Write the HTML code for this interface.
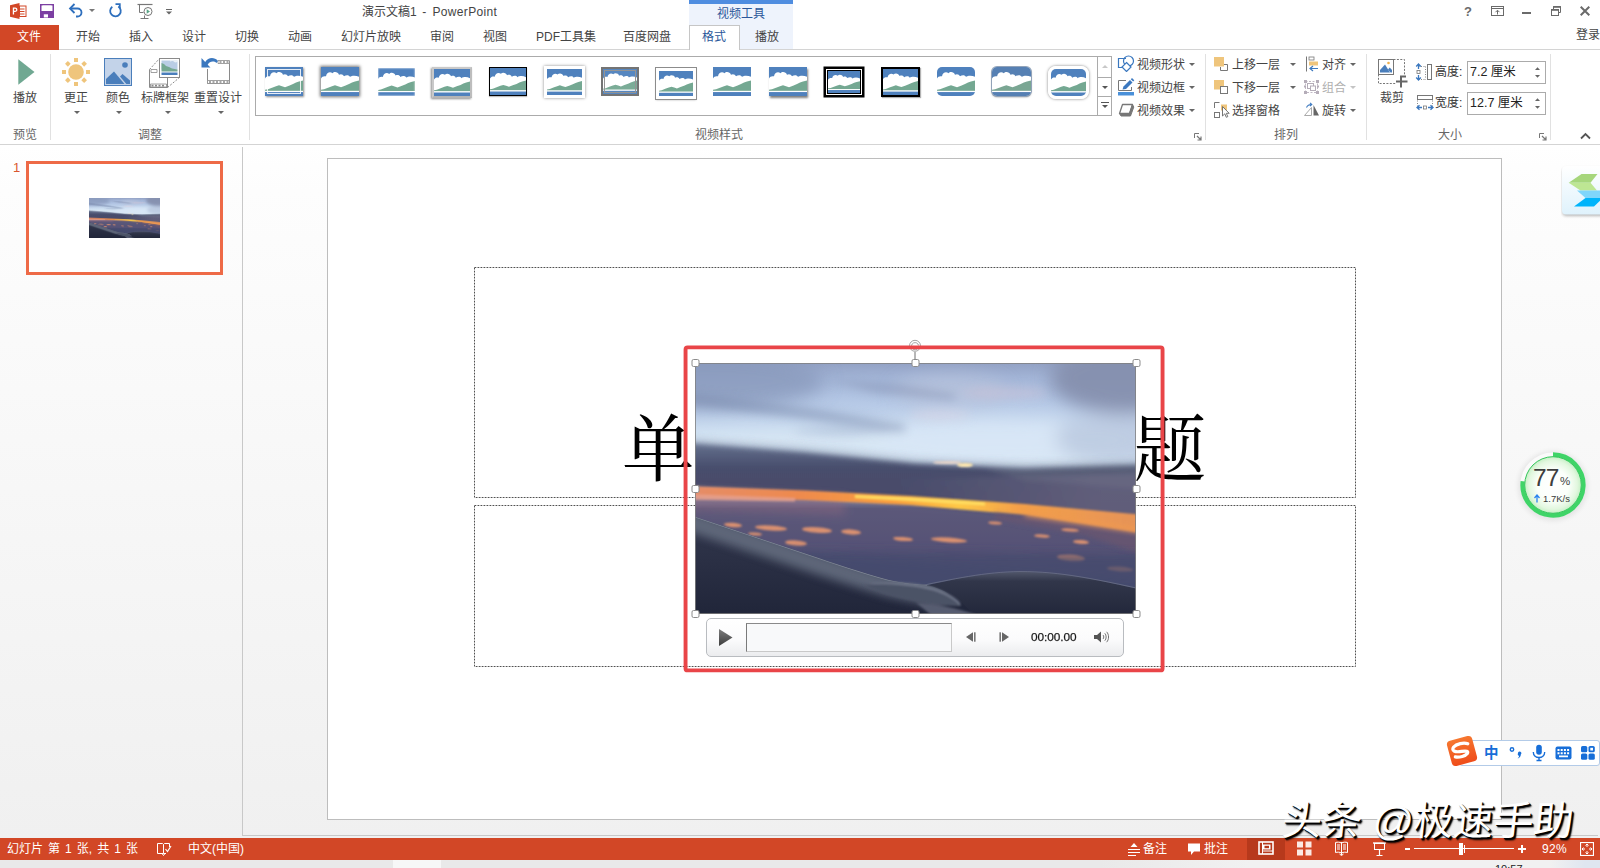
<!DOCTYPE html>
<html lang="zh-CN">
<head>
<meta charset="utf-8">
<title>演示文稿1 - PowerPoint</title>
<style>
*{box-sizing:border-box;margin:0;padding:0}
html,body{width:1600px;height:868px;overflow:hidden;background:#fff}
body{position:relative;font-family:"Liberation Sans","Noto Sans CJK SC",sans-serif;font-size:12px;color:#444;-webkit-font-smoothing:antialiased}
.abs{position:absolute}
.t{position:absolute;white-space:nowrap;line-height:1}
/* title bar */
#titlebar{left:0;top:0;width:1600px;height:24px;background:#fff}
#tabs{left:0;top:24px;width:1600px;height:26px;background:#fff;border-bottom:1px solid #d4d4d4}
#filetab{left:0;top:25px;width:59px;height:25px;background:#d24726;color:#fff}
.tab{position:absolute;top:31px;font-size:12px;color:#444;white-space:nowrap;line-height:1}
#ctx{left:689px;top:0;width:104px;height:49px;background:#eef3fc;border-top:4px solid #4f8de0}
#fmt{left:689px;top:25px;width:51px;height:25px;background:#fff;border:1px solid #c6c6c6;border-bottom:none}
/* ribbon */
#ribbon{left:0;top:50px;width:1600px;height:95px;background:#fff;border-bottom:1px solid #d4d4d4}
.sep{position:absolute;top:54px;width:1px;height:86px;background:#e1e1e1}
.glabel{position:absolute;top:129px;font-size:12px;color:#666;line-height:1;white-space:nowrap}
.blabel{position:absolute;font-size:12px;color:#444;line-height:1;white-space:nowrap}
.dd{position:absolute;width:0;height:0;border-left:3px solid transparent;border-right:3px solid transparent;border-top:3px solid #666}
/* workspace */
#work{left:0;top:145px;width:1600px;height:693px;background:linear-gradient(#ffffff 0px,#fdfdfd 45px,#f0f0f0 100%)}
#vsplit{left:242px;top:147px;width:1px;height:689px;background:#c8c8c8}
#hsplit{left:243px;top:835px;width:1355px;height:1px;background:#c8c8c8}
#slide{left:327px;top:158px;width:1175px;height:662px;background:#fff;border:1px solid #bdbdbd}
#thumb{left:26px;top:161px;width:197px;height:114px;background:#fff;border:3px solid #ee6a47}
/* status */
#status{left:0;top:838px;width:1600px;height:22px;background:#d24726;color:#fff}
#taskbar{left:0;top:860px;width:1600px;height:8px;background:#e9e9e9}
.st{position:absolute;top:843px;font-size:12px;color:#fff;line-height:1;white-space:nowrap}
.ph{position:absolute;border:1px dashed #8a8a8a}
</style>
</head>
<body>
<div class="abs" id="titlebar"></div>
<div class="abs" id="tabs"></div>
<div class="abs" id="ctx"></div>
<div class="abs" id="fmt"></div>
<div class="abs" id="filetab"></div>
<div class="abs" id="ribbon"></div>
<div class="abs" id="work"></div>
<div class="abs" id="vsplit"></div>
<div class="abs" id="hsplit"></div>
<div class="abs" id="slide"></div>
<div class="abs" id="thumb"></div>
<div class="abs" id="status"></div>
<div class="abs" id="taskbar"></div>
<div class="t" style="left:362px;top:6px;font-size:12px;color:#444">演示文稿1<span style="word-spacing:2px;letter-spacing:.35px"> - PowerPoint</span></div>
<div class="t" style="left:717px;top:8px;font-size:12px;color:#2b579a">视频工具</div>
<div class="t" style="left:1576px;top:29px;font-size:12px;color:#444">登录</div>
<svg class="abs" style="left:9px;top:2px" width="18" height="18" viewBox="0 0 18 18"><path d="M1 3.2 L10.5 1 V17 L1 14.8Z" fill="#d24726"/><rect x="10.5" y="4" width="6.5" height="10.5" fill="#fff" stroke="#d24726" stroke-width="1"/><path d="M11 7h4.5M11 9.5h4.5M11 12h4.5" stroke="#d24726" stroke-width="1"/><path d="M3.8 12.6V5.6h2.3c1.5 0 2.3.8 2.3 2.1s-.9 2.2-2.4 2.2h-.9v2.7z M5.1 6.7v2.1h.8c.8 0 1.200-.4 1.200-1.100s-.4-1-1.200-1z" fill="#fff" fill-rule="evenodd"/></svg>
<svg class="abs" style="left:40px;top:4px" width="14" height="14" viewBox="0 0 14 14"><path d="M0.750 0.750H13.250V13.250H0.750Z" fill="none" stroke="#7c3fa2" stroke-width="1.5"/><rect x="1" y="7" width="12" height="6.500" fill="#7c3fa2"/><rect x="3.800" y="10.300" width="4.200" height="3.200" fill="#fff"/><rect x="2.500" y="1.500" width="9" height="4.500" fill="#fff"/></svg>
<svg class="abs" style="left:68px;top:3px" width="16" height="15" viewBox="0 0 16 15"><path d="M2.500 5.500H9.500A4 4 0 0 1 9.500 13.500H8" fill="none" stroke="#2e6fbd" stroke-width="1.800"/><path d="M6.500 1L2 5.500L6.500 10" fill="none" stroke="#2e6fbd" stroke-width="1.800"/></svg>
<div class="dd" style="left:89px;top:9px;border-top-color:#777"></div>
<svg class="abs" style="left:108px;top:3px" width="15" height="15" viewBox="0 0 15 15"><path d="M10.300 3.600A5.300 5.300 0 1 1 4.300 3.800" fill="none" stroke="#2e6fbd" stroke-width="1.800"/><path d="M7.500 1.200H11.800V5.600" fill="none" stroke="#2e6fbd" stroke-width="1.800"/></svg>
<svg class="abs" style="left:137px;top:3px" width="17" height="17" viewBox="0 0 17 17"><path d="M0.500 1.500H15.500" stroke="#777" stroke-width="1.200"/><path d="M2.500 1.500V9.500H6.500M3.500 15.500H11.500M7.500 12.500V15.500" stroke="#777" stroke-width="1" fill="none"/><circle cx="11" cy="8.500" r="4" fill="#fff" stroke="#777" stroke-width="1"/><path d="M9.700 6.300L13 8.500L9.700 10.700Z" fill="#5aa587"/></svg>
<svg class="abs" style="left:165px;top:8px" width="8" height="8" viewBox="0 0 8 8"><path d="M1 1.500H7" stroke="#666" stroke-width="1"/><path d="M1 3.500H7L4 6.500Z" fill="#666"/></svg>
<div class="t" style="left:1464px;top:5px;font-size:13px;font-weight:bold;color:#6a6a6a">?</div>
<svg class="abs" style="left:1491px;top:6px" width="13" height="10" viewBox="0 0 13 10"><rect x="0.500" y="0.500" width="12" height="9" fill="none" stroke="#6a6a6a"/><path d="M0.500 2.500H12.500" stroke="#6a6a6a"/><path d="M6.500 8.500V4.500M4.500 6.200L6.500 4.200L8.500 6.200" fill="none" stroke="#6a6a6a" stroke-width="1"/></svg>
<div class="abs" style="left:1522px;top:12px;width:9px;height:2px;background:#6a6a6a"></div>
<svg class="abs" style="left:1551px;top:6px" width="10" height="10" viewBox="0 0 10 10"><path d="M2.500 3V0.500H9.500V6.500H7.500" fill="none" stroke="#6a6a6a" stroke-width="1"/><path d="M2 1H10" stroke="#6a6a6a" stroke-width="1.600"/><rect x="0.500" y="3.500" width="7" height="6" fill="#fff" stroke="#6a6a6a"/><path d="M0 4H8" stroke="#6a6a6a" stroke-width="1.600"/></svg>
<svg class="abs" style="left:1580px;top:6px" width="10" height="10" viewBox="0 0 10 10"><path d="M0.700 0.700L9.300 9.300M9.300 0.700L0.700 9.300" stroke="#6a6a6a" stroke-width="2"/></svg>
<!--TITLE-->
<div class="tab" style="left:17px;color:#fff">文件</div>
<div class="tab" style="left:76px;color:#444">开始</div>
<div class="tab" style="left:129px;color:#444">插入</div>
<div class="tab" style="left:182px;color:#444">设计</div>
<div class="tab" style="left:235px;color:#444">切换</div>
<div class="tab" style="left:288px;color:#444">动画</div>
<div class="tab" style="left:341px;color:#444">幻灯片放映</div>
<div class="tab" style="left:430px;color:#444">审阅</div>
<div class="tab" style="left:483px;color:#444">视图</div>
<div class="tab" style="left:536px;color:#444">PDF工具集</div>
<div class="tab" style="left:623px;color:#444">百度网盘</div>
<div class="tab" style="left:702px;color:#2b579a">格式</div>
<div class="tab" style="left:755px;color:#444">播放</div>
<!--TABS-->
<svg width="0" height="0" style="position:absolute"><defs>
<symbol id="pic" viewBox="0 0 38 28" preserveAspectRatio="none"><rect width="38" height="28" fill="#4f81bd"/><path d="M0 11 C1 9 3 8.500 5 9 C5.500 5.500 9 4 11.500 6 C13 4 17 4.500 18 7.500 C20 6.500 22 7 23 9 C25 7.500 28 7.500 29 9.500 C31 8 35 8 38 9.500 V24 H0Z" fill="#fff"/><path d="M0 22 L3 21.500 L7 20 L11 18.500 L14 17.500 L17 18.500 L20 19.500 L24 18 L28 16.500 L31 15 L34 14 L38 13 V23.500 H0Z" fill="#74a892"/><rect y="23" width="38" height="1.200" fill="#fff"/></symbol>
</defs></svg>
<svg class="abs" style="left:18px;top:59px" width="17" height="26" viewBox="0 0 17 26"><path d="M0.300 0.300L16.500 13L0.300 25.700Z" fill="#70a892"/></svg>
<div class="blabel" style="left:13px;top:92px">播放</div>
<div class="glabel" style="left:13px">预览</div>
<div class="sep" style="left:50px"></div>
<svg class="abs" style="left:62px;top:58px" width="28" height="28" viewBox="0 0 28 28"><g fill="#efc57c"><circle cx="14" cy="14" r="7.800"/><rect x="12" y="0" width="4" height="4"/><rect x="12" y="24" width="4" height="4"/><rect x="0" y="12" width="4" height="4"/><rect x="24" y="12" width="4" height="4"/><g transform="rotate(45 14 14)"><rect x="12" y="0.500" width="4" height="4"/><rect x="12" y="23.500" width="4" height="4"/><rect x="0.500" y="12" width="4" height="4"/><rect x="23.500" y="12" width="4" height="4"/></g></g></svg>
<div class="blabel" style="left:64px;top:92px">更正</div>
<div class="dd" style="left:74px;top:111px"></div>
<svg class="abs" style="left:104px;top:58px" width="28" height="28" viewBox="0 0 28 28"><rect x="0.500" y="0.500" width="27" height="27" fill="#c3d3e9" stroke="#4a7ebb"/><circle cx="21" cy="7" r="2.800" fill="#4a7ebb"/><path d="M2 26V21L10 13.500L20.500 26Z" fill="#4a7ebb"/><path d="M16 18.500L18.500 16L26 22.500V26H22.300Z" fill="#4a7ebb"/></svg>
<div class="blabel" style="left:106px;top:92px">颜色</div>
<div class="dd" style="left:116px;top:111px"></div>
<svg class="abs" style="left:148px;top:57px" width="33" height="32" viewBox="0 0 33 32"><path d="M1.500 12.500V30.500H19.500V21" fill="none" stroke="#8a8a8a" stroke-width="1"/><path d="M1.500 12.500L11.500 1.500M19.500 30.500L31.500 20.500" stroke="#8a8a8a" stroke-width="1" stroke-dasharray="2 1.500" fill="none"/><path d="M2.500 27H18.500V30H2.500Z" fill="#fff" stroke="#8a8a8a" stroke-width="0.800"/><path d="M3.500 27.800h2v1.600h-2zM7 27.800h2v1.600h-2zM10.500 27.800h2v1.600h-2zM14 27.800h2v1.600h-2z" fill="#8a8a8a"/><path d="M3 12.500h6v3h-6z" fill="#fff" stroke="#8a8a8a" stroke-width="0.800"/><rect x="11.500" y="1.500" width="20" height="19" fill="#fff" stroke="#8a8a8a"/><rect x="13.500" y="3.500" width="16" height="9" fill="#b9cde5"/><path d="M13.500 6L16 7L18 9L21 10L24 11.500L29.500 12.500V14.500H13.500Z" fill="#74a892"/><path d="M22 4.500C24 3.500 26 4 27 5.500L29.500 5V3.500H22Z" fill="#fff" opacity=".7"/><rect x="13.500" y="15.500" width="16" height="2.500" fill="#4a7ebb"/></svg>
<div class="blabel" style="left:141px;top:92px">标牌框架</div>
<div class="dd" style="left:165px;top:111px"></div>
<svg class="abs" style="left:200px;top:55px" width="32" height="30" viewBox="0 0 32 30"><path d="M7.500 14V28.500H29.500V6.500H18" fill="none" stroke="#8a8a8a" stroke-width="1"/><path d="M18 5.500H29.500V8.500H18Z" fill="#fff" stroke="#8a8a8a" stroke-width="0.800"/><path d="M19.500 6.200h2v1.600h-2zM23 6.200h2v1.600h-2zM26.500 6.200h2v1.600h-2z" fill="#8a8a8a"/><path d="M7.500 25.500H29.500V28.500H7.500Z" fill="#fff" stroke="#8a8a8a" stroke-width="0.800"/><path d="M9 26.200h2v1.600H9zM12.500 26.200h2v1.600h-2zM16 26.200h2v1.600h-2zM19.500 26.200h2v1.600h-2zM23 26.200h2v1.600h-2zM26.500 26.200h2v1.600h-2z" fill="#8a8a8a"/><path d="M1.500 3V12.500H10.500L7.700 9.700C9.500 6.500 13.500 5.500 16.500 8L18 6C14 1.500 8 2.500 5.200 7Z" fill="#3b78bf"/></svg>
<div class="blabel" style="left:194px;top:92px">重置设计</div>
<div class="dd" style="left:218px;top:111px"></div>
<div class="glabel" style="left:138px">调整</div>
<div class="sep" style="left:249px"></div>
<div class="abs" style="left:255px;top:56px;width:857px;height:60px;border:1px solid #ababab;background:#fff"></div>
<div class="abs" style="left:1097px;top:56px;width:15px;height:60px;border:1px solid #ababab;background:#fff"></div>
<div class="abs" style="left:1097px;top:77px;width:15px;height:20px;border-top:1px solid #ababab;border-bottom:1px solid #ababab"></div>
<div class="abs" style="left:1102px;top:65px;width:0;height:0;border-left:3px solid transparent;border-right:3px solid transparent;border-bottom:3px solid #c8c8c8"></div>
<div class="dd" style="left:1102px;top:86px;border-top-color:#555"></div>
<div class="abs" style="left:1101px;top:102px;width:8px;height:1px;background:#555"></div>
<div class="dd" style="left:1102px;top:105px;border-top-color:#555"></div>
<div class="abs" style="left:265px;top:67px;width:38px;height:29px;box-shadow:1px 1px 2px rgba(0,0,0,.45)"><svg width="100%" height="100%" style="display:block"><use href="#pic" width="100%" height="100%"/></svg><div class="abs" style="left:2px;top:2px;right:2px;bottom:2px;border:1px solid rgba(255,255,255,.85)"></div></div>
<div class="abs" style="left:321px;top:67px;width:38px;height:29px;box-shadow:0 0 3px 1px rgba(0,0,0,.55)"><svg width="100%" height="100%" style="display:block"><use href="#pic" width="100%" height="100%"/></svg></div>
<div class="abs" style="left:378px;top:68px;width:37px;height:28px;filter:blur(.35px)"><svg width="100%" height="100%" style="display:block"><use href="#pic" width="100%" height="100%"/></svg><div class="abs" style="left:-1px;top:-1px;right:-1px;bottom:-1px;box-shadow:inset 0 0 1.500px 1.200px #fff"></div></div>
<div class="abs" style="left:432px;top:67px;width:40px;height:31px;border:2px solid #c9c9c9;border-right-color:#bdbdbd;border-bottom-color:#b5b5b5;box-shadow:-1px 1px 2px rgba(0,0,0,.45)"><svg width="100%" height="100%" style="display:block"><use href="#pic" width="100%" height="100%"/></svg></div>
<div class="abs" style="left:489px;top:67px;width:38px;height:29px;border:1.500px solid #000;box-shadow:0 1px 1px rgba(0,0,0,.25)"><svg width="100%" height="100%" style="display:block"><use href="#pic" width="100%" height="100%"/></svg></div>
<div class="abs" style="left:544px;top:66px;width:41px;height:32px;border:3px solid #fff;box-shadow:0 0 3px rgba(0,0,0,.45)"><svg width="100%" height="100%" style="display:block"><use href="#pic" width="100%" height="100%"/></svg></div>
<div class="abs" style="left:601px;top:67px;width:38px;height:29px;border:2px solid #6d6d6d;outline:1px solid #8f8f8f;outline-offset:-4px;opacity:.95"><svg width="100%" height="100%" style="display:block"><use href="#pic" width="100%" height="100%"/></svg></div>
<div class="abs" style="left:656px;top:68px;width:40px;height:31px;border:3px solid #fff;outline:1px solid #8c8c8c;box-shadow:0 1px 2px rgba(0,0,0,.3)"><svg width="100%" height="100%" style="display:block"><use href="#pic" width="100%" height="100%"/></svg></div>
<div class="abs" style="left:713px;top:67px;width:38px;height:29px;"><svg width="100%" height="100%" style="display:block"><use href="#pic" width="100%" height="100%"/></svg></div>
<div class="abs" style="left:769px;top:67px;width:38px;height:29px;box-shadow:1px 2px 2px rgba(0,0,0,.5)"><svg width="100%" height="100%" style="display:block"><use href="#pic" width="100%" height="100%"/></svg></div>
<div class="abs" style="left:828px;top:71px;width:32px;height:22px;outline:1px solid #000;box-shadow:0 0 0 2px #fff,0 0 0 4.500px #000"><svg width="100%" height="100%" style="display:block"><use href="#pic" width="100%" height="100%"/></svg></div>
<div class="abs" style="left:881px;top:67px;width:39px;height:30px;border:2.500px solid #000;box-shadow:1px 1px 1px rgba(0,0,0,.3)"><svg width="100%" height="100%" style="display:block"><use href="#pic" width="100%" height="100%"/></svg></div>
<div class="abs" style="left:937px;top:67px;width:38px;height:29px;border-radius:5px;overflow:hidden"><svg width="100%" height="100%" style="display:block"><use href="#pic" width="100%" height="100%"/></svg></div>
<div class="abs" style="left:992px;top:67px;width:39px;height:29px;border-radius:5px;overflow:hidden;box-shadow:0 0 0 1px #8fa3bd,0 1px 2px rgba(0,0,0,.5);filter:saturate(.85)"><svg width="100%" height="100%" style="display:block"><use href="#pic" width="100%" height="100%"/></svg></div>
<div class="abs" style="left:1048px;top:66px;width:41px;height:33px;border-radius:8px;overflow:hidden;border:3px solid #fff;box-shadow:0 0 3px rgba(0,0,0,.5)"><svg width="100%" height="100%" style="display:block"><use href="#pic" width="100%" height="100%"/></svg></div>
<!--GALLERY-->
<svg class="abs" style="left:1117px;top:55px" width="18" height="17" viewBox="0 0 18 17"><path d="M7 12.500H1.500V3.500H9" fill="none" stroke="#3b78bf" stroke-width="1.200"/><circle cx="11.500" cy="6" r="5" fill="none" stroke="#3b78bf" stroke-width="1.200"/><path d="M9.500 7.500L14 12L9.500 16.500L5 12Z" fill="#fff" stroke="#3b78bf" stroke-width="1.200"/></svg>
<div class="blabel" style="left:1137px;top:59px">视频形状</div><div class="dd" style="left:1189px;top:63px"></div>
<svg class="abs" style="left:1117px;top:78px" width="18" height="18" viewBox="0 0 18 18"><path d="M9 2.500H1.500V12.500H14.500V9" fill="none" stroke="#777" stroke-width="1"/><path d="M5.500 11.500L6.500 8.500L13 2L15.500 4.500L9 11Z" fill="#3b78bf"/><path d="M13.800 1.200L15 0L17.300 2.300L16.200 3.500Z" fill="#3b78bf"/><rect x="1" y="14" width="16" height="3.500" fill="#4a90d9"/></svg>
<div class="blabel" style="left:1137px;top:82px">视频边框</div><div class="dd" style="left:1189px;top:86px"></div>
<svg class="abs" style="left:1117px;top:102px" width="18" height="16" viewBox="0 0 18 16"><path d="M5.500 2.500H15.500L12.500 11.500H2.500Z" fill="#fff" stroke="#777" stroke-width="1.300" stroke-linejoin="round"/><path d="M2.500 11.500L4 14H13.500L12.500 11.500Z M12.500 11.500L15.500 2.500L16.800 5L13.500 14Z" fill="#777" stroke="#777" stroke-width="1" stroke-linejoin="round"/></svg>
<div class="blabel" style="left:1137px;top:105px">视频效果</div><div class="dd" style="left:1189px;top:109px"></div>
<svg class="abs" style="left:1194px;top:133px" width="8" height="8" viewBox="0 0 8 8"><path d="M0.500 5V0.500H5" fill="none" stroke="#777"/><path d="M3 3L7 7M7 3.500V7H3.500" fill="none" stroke="#777" stroke-width="1.200"/></svg>
<div class="glabel" style="left:695px">视频样式</div>
<div class="sep" style="left:1205px"></div>
<svg class="abs" style="left:1213px;top:56px" width="16" height="16" viewBox="0 0 16 16"><path d="M8.500 8.500H14.500V14.500H7.500V11" fill="none" stroke="#777" stroke-width="1"/><rect x="1" y="1" width="10" height="9.500" fill="#efc57c"/></svg>
<div class="blabel" style="left:1232px;top:59px">上移一层</div><div class="dd" style="left:1290px;top:63px"></div>
<svg class="abs" style="left:1213px;top:79px" width="16" height="16" viewBox="0 0 16 16"><rect x="1" y="1" width="10" height="9.500" fill="#efc57c"/><rect x="7.500" y="7.500" width="7" height="7" fill="#fff" stroke="#777"/></svg>
<div class="blabel" style="left:1232px;top:82px">下移一层</div><div class="dd" style="left:1290px;top:86px"></div>
<svg class="abs" style="left:1213px;top:101px" width="17" height="18" viewBox="0 0 17 18"><path d="M1.500 7V1.500H6.500" fill="none" stroke="#777"/><rect x="1.500" y="11.500" width="5" height="5" fill="#fff" stroke="#777"/><rect x="8" y="3.500" width="6" height="6" fill="#efc57c"/><path d="M9.500 5.500V15L11.800 12.800L13.300 16.300L14.800 15.600L13.300 12.300H16.200Z" fill="#fff" stroke="#666" stroke-width="0.900" stroke-linejoin="round"/></svg>
<div class="blabel" style="left:1232px;top:105px">选择窗格</div>
<svg class="abs" style="left:1305px;top:56px" width="14" height="16" viewBox="0 0 14 16"><path d="M1.500 0.500V15.500" stroke="#777"/><rect x="4" y="1" width="5" height="3" fill="#fff" stroke="#777" stroke-width="0.800"/><rect x="4" y="5.500" width="9" height="4" fill="#efc57c"/><path d="M13 12.500H5M8 10L5 12.500L8 15" fill="none" stroke="#3b78bf" stroke-width="1.200"/></svg>
<div class="blabel" style="left:1322px;top:59px">对齐</div><div class="dd" style="left:1350px;top:63px"></div>
<svg class="abs" style="left:1303px;top:79px" width="17" height="16" viewBox="0 0 17 16"><rect x="2.500" y="2.500" width="12" height="11" fill="none" stroke="#c0b8c4" stroke-dasharray="2 1.500"/><rect x="4.500" y="4.500" width="6" height="5" fill="none" stroke="#b5adb9"/><rect x="7.500" y="7" width="5" height="4.500" fill="#fff" stroke="#b5adb9"/><path d="M1 1h3v3H1zM13 1h3v3h-3zM1 12h3v3H1zM13 12h3v3h-3zM1 6.500h2v2H1zM14 6.500h2v2h-2z" fill="#b5adb9"/></svg>
<div class="blabel" style="left:1322px;top:82px;color:#b0b0b0">组合</div><div class="dd" style="left:1350px;top:86px;border-top-color:#c4c4c4"></div>
<svg class="abs" style="left:1303px;top:102px" width="18" height="16" viewBox="0 0 18 16"><path d="M8.500 5.500V13.500H1.500Z" fill="none" stroke="#aaa" stroke-width="1"/><path d="M10.500 3V13.500H16Z" fill="#666"/><path d="M3.500 5.500C4.500 3 6.500 2.500 8.500 2.500M7 0.800L8.800 2.500L7 4.200" fill="none" stroke="#3b78bf" stroke-width="1.100"/></svg>
<div class="blabel" style="left:1322px;top:105px">旋转</div><div class="dd" style="left:1350px;top:109px"></div>
<div class="glabel" style="left:1274px">排列</div>
<div class="sep" style="left:1366px"></div>
<svg class="abs" style="left:1377px;top:58px" width="32" height="31" viewBox="0 0 32 31"><path d="M16.500 1.500H27.500V17.500M1.500 13V25.500H19" fill="none" stroke="#777" stroke-dasharray="2 1.400"/><rect x="1.500" y="1.500" width="15" height="15" fill="#fff" stroke="#777"/><circle cx="11.500" cy="5" r="1.300" fill="#efb04e"/><path d="M3 14.500V12L8 6.500L13 14.500Z" fill="#4a7ebb"/><path d="M11 11.500L12.700 9.500L15 12V14.500H13.500Z" fill="#4a7ebb"/><path d="M19 23.500H30.500M24 29.500V18.500H29" fill="none" stroke="#666" stroke-width="2"/></svg>
<div class="blabel" style="left:1380px;top:92px">裁剪</div>
<svg class="abs" style="left:1415px;top:63px" width="18" height="18" viewBox="0 0 18 18"><rect x="12.500" y="1.500" width="4" height="15" fill="#fff" stroke="#777"/><path d="M3.500 3.500H10.500M3.500 16.500H10.500M10.500 3.500V16.500" fill="none" stroke="#888" stroke-dasharray="1 1.500"/><rect x="2" y="7.500" width="3" height="3" fill="#fff" stroke="#777" stroke-width="0.800"/><path d="M3.500 1V6M1.200 3.500L3.500 1L5.800 3.500M3.500 17V12M1.200 14.500L3.500 17L5.800 14.500" fill="none" stroke="#3b78bf" stroke-width="1.300"/></svg>
<div class="blabel" style="left:1435px;top:66px;color:#333">高度:</div>
<div class="abs" style="left:1467px;top:61px;width:79px;height:23px;border:1px solid #ababab;background:#fff"></div>
<div class="blabel" style="left:1470px;top:66px;color:#222;font-size:12.500px">7.2 厘米</div>
<svg class="abs" style="left:1416px;top:94px" width="18" height="18" viewBox="0 0 18 18"><rect x="1.500" y="1.500" width="15" height="4" fill="#fff" stroke="#777"/><path d="M1.500 6.500V13M16.500 6.500V13" fill="none" stroke="#888" stroke-dasharray="1 1.500"/><rect x="7.500" y="12" width="3" height="3" fill="#fff" stroke="#777" stroke-width="0.800"/><path d="M1 13.500H6M3.500 11.200L1 13.500L3.500 15.800M17 13.500H12M14.500 11.200L17 13.500L14.500 15.800" fill="none" stroke="#3b78bf" stroke-width="1.300"/></svg>
<div class="blabel" style="left:1435px;top:97px;color:#333">宽度:</div>
<div class="abs" style="left:1467px;top:92px;width:79px;height:23px;border:1px solid #ababab;background:#fff"></div>
<div class="blabel" style="left:1470px;top:97px;color:#222;font-size:12.500px">12.7 厘米</div>
<svg class="abs" style="left:1534px;top:66px" width="7" height="13" viewBox="0 0 7 13"><path d="M1 4L3.500 1.200L6 4ZM1 9L3.500 11.800L6 9Z" fill="#666"/></svg>
<svg class="abs" style="left:1534px;top:97px" width="7" height="13" viewBox="0 0 7 13"><path d="M1 4L3.500 1.200L6 4ZM1 9L3.500 11.800L6 9Z" fill="#666"/></svg>
<div class="glabel" style="left:1438px">大小</div>
<svg class="abs" style="left:1539px;top:133px" width="8" height="8" viewBox="0 0 8 8"><path d="M0.500 5V0.500H5" fill="none" stroke="#777"/><path d="M3 3L7 7M7 3.500V7H3.500" fill="none" stroke="#777" stroke-width="1.200"/></svg>
<div class="sep" style="left:1550px"></div>
<svg class="abs" style="left:1580px;top:132px" width="11" height="8" viewBox="0 0 11 8"><path d="M1 6.500L5.500 2L10 6.500" fill="none" stroke="#555" stroke-width="1.800"/></svg>
<!--RIBBON-->
<!--SLIDE_BEGIN-->
<svg class="abs" style="left:470px;top:262px" width="892" height="410" viewBox="470 262 892 410"><rect x="474.500" y="267.500" width="881" height="230" fill="none" stroke="#505050" stroke-width="1" stroke-dasharray="1.800 1.200"/><rect x="474.500" y="505.500" width="881" height="161" fill="none" stroke="#505050" stroke-width="1" stroke-dasharray="1.800 1.200"/></svg>
<div class="t" id="ttl" style="left:622px;top:415px;font-size:72.400px;letter-spacing:.7px;color:#000;font-family:'Liberation Serif','Noto Serif CJK SC',serif;font-weight:400">单击此处添加标题</div>
<svg class="abs" style="left:695px;top:363px" width="441" height="251" viewBox="0 0 441 251">
<defs>
<linearGradient id="sky" x1="0" y1="0" x2="0" y2="1"><stop offset="0" stop-color="#93a2c5"/><stop offset=".06" stop-color="#a3b5d7"/><stop offset=".15" stop-color="#b4c7e5"/><stop offset=".27" stop-color="#c9dbf0"/><stop offset=".38" stop-color="#d7e6f3"/><stop offset=".5" stop-color="#d0dde8"/><stop offset=".58" stop-color="#55597a"/><stop offset=".75" stop-color="#4c4f74"/><stop offset="1" stop-color="#40476a"/></linearGradient>
<linearGradient id="band" x1="0" y1="0" x2="0" y2="1"><stop offset="0" stop-color="#66728f"/><stop offset=".3" stop-color="#474d6c"/><stop offset=".8" stop-color="#4b4a69"/><stop offset="1" stop-color="#5c506b"/></linearGradient>
<linearGradient id="org" x1="0" y1="0" x2="1" y2="0"><stop offset="0" stop-color="#e38d6c"/><stop offset=".25" stop-color="#ee8a4e"/><stop offset=".45" stop-color="#fa9e3c"/><stop offset=".58" stop-color="#ffc845"/><stop offset=".7" stop-color="#f4a049"/><stop offset="1" stop-color="#e2905c"/></linearGradient>
<linearGradient id="wing" gradientUnits="userSpaceOnUse" x1="60" y1="170" x2="30" y2="256"><stop offset="0" stop-color="#6a7183"/><stop offset=".12" stop-color="#4f566a"/><stop offset=".35" stop-color="#363c51"/><stop offset=".7" stop-color="#272c41"/><stop offset="1" stop-color="#20253a"/></linearGradient>
<linearGradient id="wing2" x1="0" y1="0" x2="0" y2="1"><stop offset="0" stop-color="#343a4f"/><stop offset=".5" stop-color="#2a2f44"/><stop offset="1" stop-color="#1f2438"/></linearGradient>
<linearGradient id="rfade" gradientUnits="userSpaceOnUse" x1="200" y1="0" x2="400" y2="0"><stop offset="0" stop-color="#76708a" stop-opacity="0"/><stop offset="1" stop-color="#76708a" stop-opacity=".5"/></linearGradient>
<linearGradient id="eng" x1="0" y1="0" x2="0" y2="1"><stop offset="0" stop-color="#50566a"/><stop offset=".18" stop-color="#31364a"/><stop offset="1" stop-color="#1f2437"/></linearGradient>
<filter id="b1" x="-10%" y="-50%" width="120%" height="200%"><feGaussianBlur stdDeviation="1"/></filter>
<filter id="b2" x="-10%" y="-50%" width="120%" height="200%"><feGaussianBlur stdDeviation="2.500"/></filter>
<filter id="b4" x="-10%" y="-50%" width="120%" height="200%"><feGaussianBlur stdDeviation="5"/></filter>
<filter id="b8" x="-30%" y="-80%" width="160%" height="260%"><feGaussianBlur stdDeviation="9"/></filter>
<clipPath id="vclip"><rect width="441" height="251"/></clipPath>
</defs>
<g id="vidg" clip-path="url(#vclip)">
<rect width="441" height="251" fill="url(#sky)"/>
<g filter="url(#b8)"><ellipse cx="430" cy="15" rx="75" ry="35" fill="#858fae" opacity=".95"/><ellipse cx="10" cy="18" rx="120" ry="28" fill="#8797ba" opacity=".75"/><ellipse cx="300" cy="78" rx="150" ry="22" fill="#d9e8f7" opacity=".85"/><ellipse cx="420" cy="75" rx="60" ry="25" fill="#b9c7df" opacity=".8"/><ellipse cx="255" cy="28" rx="55" ry="16" fill="#b9c3dc" opacity=".7"/><ellipse cx="80" cy="78" rx="120" ry="10" fill="#d9e8f4" opacity=".8"/></g>
<g filter="url(#b4)" opacity=".5"><path d="M-20 28 L120 46 L210 62 L210 69 L110 56 L-20 40Z" fill="#7888aa"/><path d="M130 16 L200 21 L260 31 L260 37 L180 30Z" fill="#8592b3"/><ellipse cx="310" cy="30" rx="42" ry="6" fill="#cbc1d6"/><ellipse cx="245" cy="52" rx="30" ry="5" fill="#dcd5e4"/><ellipse cx="150" cy="68" rx="50" ry="3" fill="#93a3c2"/></g>
<g filter="url(#b4)" opacity=".6"><path d="M-30 76 L110 87 L220 98 L330 103 L470 99 V120 L-30 110Z" fill="#66728f"/></g>
<g filter="url(#b2)"><path d="M-30 79 L110 90 L220 101 L330 106 L470 102 V165 L215 137 L-30 125Z" fill="url(#band)"/><path d="M290 106 L470 100 V128 L330 117Z" fill="#747a8c" opacity=".35"/><path d="M200 116 L470 110 V168 L330 150 L200 137Z" fill="url(#rfade)"/></g>
<g filter="url(#b4)"><path d="M-30 128 L215 138 L470 162 V220 L-30 180Z" fill="#6e5a79" opacity=".32"/><path d="M-30 126 L150 134 L150 152 L-30 146Z" fill="#8a6680" opacity=".5"/></g>
<g filter="url(#b1)"><path d="M-20 122.500 L110 127.500 L215 133 L330 141 L470 154 V174 L400 163 L330 152 L215 142 L110 137 L-20 133.500Z" fill="url(#org)"/><path d="M160 132 L215 134.500 L290 139.500 L290 142.500 L215 138 L160 135Z" fill="#ffdd60"/><path d="M-20 130.500 L100 135 L100 138.500 L-20 136.500Z" fill="#e6a08c" opacity=".85"/></g>
<g filter="url(#b2)" opacity=".75"><path d="M300 150 L470 176 V200 L390 172 L300 156Z" fill="#6a5670"/><path d="M330 149 L470 168 V174 L330 153Z" fill="#f09a50"/></g>
<g filter="url(#b1)"><ellipse cx="270" cy="102" rx="8" ry="2" fill="#ffe9b0"/><ellipse cx="252" cy="99.500" rx="14" ry="1.600" fill="#f6dccb" opacity=".8"/></g>
<g filter="url(#b1)" fill="#e8976f" opacity=".9"><ellipse cx="76" cy="165" rx="16" ry="2.5" transform="rotate(4 76 165)"/><ellipse cx="122" cy="167" rx="15" ry="2.8" transform="rotate(4 122 167)"/><ellipse cx="156" cy="169" rx="10" ry="2.6" transform="rotate(4 156 169)"/><ellipse cx="101" cy="180" rx="11" ry="2.6" transform="rotate(4 101 180)"/><ellipse cx="38" cy="162" rx="9" ry="2.2" transform="rotate(4 38 162)"/><ellipse cx="208" cy="176" rx="10" ry="2" transform="rotate(4 208 176)"/><ellipse cx="254" cy="177" rx="18" ry="2.4" transform="rotate(4 254 177)"/><ellipse cx="347" cy="173" rx="8" ry="1.6" transform="rotate(4 347 173)"/><ellipse cx="376" cy="195" rx="14" ry="3.2" transform="rotate(4 376 195)"/><ellipse cx="425" cy="206" rx="13" ry="2.4" transform="rotate(4 425 206)"/><ellipse cx="386" cy="179" rx="8" ry="2" transform="rotate(4 386 179)"/><ellipse cx="375" cy="167" rx="9" ry="1.6" transform="rotate(4 375 167)"/><ellipse cx="60" cy="171" rx="7" ry="1.5" transform="rotate(4 60 171)"/><ellipse cx="300" cy="160" rx="7" ry="1.5" transform="rotate(4 300 160)"/></g>
<g filter="url(#b4)"><path d="M100 188 L470 192 V228 L100 228Z" fill="#434a6e" opacity=".75"/></g>
<path d="M215 226 C260 216 290 209.500 325 209 C365 209 400 216 470 232 V260 H215Z" fill="url(#eng)"/>
<path d="M215 225 C260 215.500 290 209 325 208.500 C365 208.500 400 215.500 470 231.500" fill="none" stroke="#7b8292" stroke-width="1" opacity=".55"/>
<clipPath id="wclip"><path d="M-20 147 L125 195.500 C150 204 175 212 194 217 C210 220.500 222 221.500 232 222 C250 226 270 238 285 260 H-20Z"/></clipPath>
<g clip-path="url(#wclip)"><rect x="-20" y="140" width="320" height="120" fill="url(#wing2)"/><path d="M-30 150 L125 202 C150 210 175 218 194 223 C210 227 230 229 250 236" fill="none" stroke="#626a7d" stroke-width="20" filter="url(#b4)" opacity=".95"/><path d="M-20 147 L125 195.500 C150 204 175 212 194 217 C210 220.500 222 221.500 232 222" fill="none" stroke="#8990a0" stroke-width="1.600" opacity=".8"/></g>
<g filter="url(#b1)"><path d="M168 221.500 C190 217.500 225 219 245 227 C258 232.500 268 240 265 243 C245 243 195 236 168 221.500Z" fill="#4c5266"/><path d="M168 221.500 C190 217.500 225 219 245 227 C258 232.500 268 240 265 243 C262 238 250 231 238 227.500 C215 221.500 190 220.500 168 221.500Z" fill="#6d7487"/><path d="M221 239.500 C240 241 262 245 282 252 H236Z" fill="#565c70"/></g>
</g>
<rect x="0.500" y="0.500" width="440" height="250" fill="none" stroke="#7f7f7f" stroke-width="1" opacity=".8"/>
</svg>
<svg class="abs" style="left:680px;top:335px" width="470" height="290" viewBox="680 335 470 290"><circle cx="915" cy="345.800" r="5.500" fill="#fff" stroke="#9a9a9a" stroke-width=".9"/><path d="M918 348.300A3.600 3.600 0 1 1 918.600 345.500" fill="none" stroke="#9a9a9a" stroke-width=".9"/><path d="M915 352V360" stroke="#6e6e6e" stroke-width="1"/><rect x="692" y="359.5" width="7" height="7" rx="1.500" fill="#fff" stroke="#8c8c8c" stroke-width="1"/><rect x="912" y="359.5" width="7" height="7" rx="1.500" fill="#fff" stroke="#8c8c8c" stroke-width="1"/><rect x="1133" y="359.5" width="7" height="7" rx="1.500" fill="#fff" stroke="#8c8c8c" stroke-width="1"/><rect x="692" y="485.5" width="7" height="7" rx="1.500" fill="#fff" stroke="#8c8c8c" stroke-width="1"/><rect x="1133" y="485.5" width="7" height="7" rx="1.500" fill="#fff" stroke="#8c8c8c" stroke-width="1"/><rect x="692" y="610.5" width="7" height="7" rx="1.500" fill="#fff" stroke="#8c8c8c" stroke-width="1"/><rect x="912" y="610.5" width="7" height="7" rx="1.500" fill="#fff" stroke="#8c8c8c" stroke-width="1"/><rect x="1133" y="610.5" width="7" height="7" rx="1.500" fill="#fff" stroke="#8c8c8c" stroke-width="1"/></svg>
<div class="abs" style="left:706px;top:618px;width:418px;height:39px;border:1px solid #b9bcc0;border-radius:5px;background:linear-gradient(#ffffff,#fbfbfc 55%,#ebecee)"></div>
<svg class="abs" style="left:718px;top:628px" width="15" height="19" viewBox="0 0 15 19"><defs><linearGradient id="pg" x1="0" y1="0" x2="0" y2="1"><stop offset="0" stop-color="#7d7d7d"/><stop offset="1" stop-color="#3c3c3c"/></linearGradient></defs><path d="M1 1L14.500 9.500L1 18Z" fill="url(#pg)"/></svg>
<div class="abs" style="left:746px;top:623px;width:206px;height:29px;background:#f8f9fa;border:1px solid #c9c9c9;border-top-color:#8a8a8a;border-left-color:#7a7a7a"></div>
<svg class="abs" style="left:965px;top:631px" width="12" height="12" viewBox="0 0 12 12"><path d="M1 6L8 1.300V10.700Z" fill="#666"/><rect x="9" y="1.300" width="1.600" height="9.400" fill="#777"/></svg>
<svg class="abs" style="left:998px;top:631px" width="12" height="12" viewBox="0 0 12 12"><path d="M11 6L4 1.300V10.700Z" fill="#666"/><rect x="1.400" y="1.300" width="1.600" height="9.400" fill="#777"/></svg>
<div class="t" style="left:1031px;top:632px;font-size:11.800px;color:#1a1a1a;letter-spacing:-.05px;-webkit-text-stroke:.25px #1a1a1a">00:00.00</div>
<svg class="abs" style="left:1093px;top:630px" width="18" height="14" viewBox="0 0 18 14"><path d="M1 5H4L8 1.500V12.500L4 9H1Z" fill="#555"/><path d="M10 5C11 6 11 8 10 9M11.800 3.300C13.600 5 13.600 9 11.800 10.700M13.600 1.800C16.200 4.500 16.200 9.500 13.600 12.200" fill="none" stroke="#666" stroke-width=".9"/></svg>
<svg class="abs" style="left:680px;top:342px" width="490" height="335" viewBox="680 342 490 335"><rect x="685.550" y="347.400" width="477" height="323" rx="2" fill="none" stroke="#e94548" stroke-width="3.900"/></svg>
<!--SLIDE_END-->
<!--SLIDE-->
<!--ST_BEGIN-->
<div class="t" style="left:13px;top:161px;font-size:13px;color:#d9562f">1</div>
<svg class="abs" style="left:89px;top:198px" width="71" height="40" viewBox="0 0 441 251" preserveAspectRatio="none"><use href="#vidg"/></svg>
<div class="st" style="left:7px;word-spacing:1.700px">幻灯片 第 1 张, 共 1 张</div>
<svg class="abs" style="left:156px;top:842px" width="16" height="14" viewBox="0 0 16 14"><path d="M1.500 1.500H6.500L7.500 2.500V11.500H1.500Z" fill="none" stroke="#fff" stroke-width="1"/><path d="M7.500 2.500L8.500 1.500H13.500V5M7.500 11.500H10" fill="none" stroke="#fff" stroke-width="1"/><path d="M9.500 7L11.500 9.500L15 4" fill="none" stroke="#fff" stroke-width="1.200"/><path d="M6 11.500L7.500 13.500L9 11.500" fill="none" stroke="#fff" stroke-width="1"/></svg>
<div class="st" style="left:188px">中文(中国)</div>
<svg class="abs" style="left:1127px;top:842px" width="14" height="14" viewBox="0 0 14 14"><path d="M7 1L10.500 5H3.500Z" fill="#fff"/><path d="M1 7.500H13M1 10.500H13M1 13.500H9" stroke="#fff" stroke-width="1"/></svg>
<div class="st" style="left:1143px">备注</div>
<svg class="abs" style="left:1187px;top:842px" width="14" height="14" viewBox="0 0 14 14"><path d="M1 1.500H13V9.500H7L4 13V9.500H1Z" fill="#fff"/></svg>
<div class="st" style="left:1204px">批注</div>
<div class="abs" style="left:1247px;top:838px;width:38px;height:22px;background:#b7391c"></div>
<svg class="abs" style="left:1258px;top:841px" width="16" height="14" viewBox="0 0 16 14"><rect x="1" y="1" width="14" height="12" fill="none" stroke="#fff" stroke-width="1.600"/><rect x="5" y="3.500" width="7.500" height="5" fill="#fff"/><rect x="6.500" y="4.800" width="4.500" height="2.400" fill="#b7391c"/><path d="M4.500 1V13M4.500 10H15" stroke="#fff" stroke-width="1"/></svg>
<svg class="abs" style="left:1297px;top:841px" width="15" height="15" viewBox="0 0 15 15"><path d="M0 0.500h6v6H0zM8.500 0.500h6v6h-6zM0 8.500h6v6H0zM8.500 8.500h6v6h-6z" fill="#fbe9e4"/></svg>
<svg class="abs" style="left:1334px;top:841px" width="15" height="15" viewBox="0 0 15 15"><path d="M1.500 1.500C3.500 1 5.500 1 7.500 2C9.500 1 11.500 1 13.500 1.500V11.500C11.500 11 9.500 11 7.500 12C5.500 11 3.500 11 1.500 11.500Z" fill="none" stroke="#fff" stroke-width="1"/><path d="M7.500 1V14M3 4H6M3 6H6M3 8H6M9 4H12M9 6H12M9 8H12M5.500 13L7.500 14.500L9.500 13" stroke="#fff" stroke-width="1" fill="none"/></svg>
<svg class="abs" style="left:1373px;top:842px" width="13" height="15" viewBox="0 0 13 15"><path d="M0 1H13" stroke="#fff" stroke-width="1.400"/><rect x="1.500" y="1.500" width="10" height="6" fill="none" stroke="#fff"/><path d="M6.500 7.500V13M3.500 13.500H9.500" stroke="#fff" stroke-width="1.200"/></svg>
<div class="abs" style="left:1405px;top:848px;width:5px;height:2px;background:#fff"></div>
<div class="abs" style="left:1414px;top:848px;width:100px;height:1px;background:#fff"></div>
<div class="abs" style="left:1464px;top:845px;width:1px;height:8px;background:#fff"></div>
<div class="abs" style="left:1459px;top:843px;width:4px;height:12px;background:#fff"></div>
<svg class="abs" style="left:1518px;top:845px" width="8" height="8" viewBox="0 0 8 8"><path d="M0 4H8M4 0V8" stroke="#fff" stroke-width="2"/></svg>
<div class="st" style="left:1542px;letter-spacing:.3px">92%</div>
<svg class="abs" style="left:1580px;top:842px" width="14" height="14" viewBox="0 0 14 14"><rect x="0.500" y="0.500" width="13" height="13" fill="none" stroke="#fff" stroke-width="1.200"/><path d="M7 2V5M7 12V9M2 7H5M12 7H9M5.500 3.500L7 2L8.500 3.500M5.500 10.500L7 12L8.500 10.500M3.500 5.500L2 7L3.500 8.500M10.500 5.500L12 7L10.500 8.500" stroke="#fff" stroke-width="1" fill="none"/></svg>
<div class="abs" id="tbhl" style="left:393px;top:860px;width:48px;height:8px;background:#f7f7f7"></div>
<div class="abs" style="left:1100px;top:860px;width:500px;height:8px;background:linear-gradient(90deg,#e9e9e9,#f1f1f1 30%,#f1f1f1 90%,#dfe6f0 97%)"></div>
<div class="t" style="left:1495px;top:864px;font-size:11px;color:#222">10:57</div>
<!--ST_END-->
<!--STATUS-->
<!--OV_BEGIN-->
<svg class="abs" style="left:1561px;top:160px" width="39" height="62" viewBox="0 0 39 62"><defs><linearGradient id="wg" x1="0" y1="0" x2="0" y2="1"><stop offset="0" stop-color="#ffffff"/><stop offset="1" stop-color="#dff2fc"/></linearGradient><filter id="wsh" x="-30%" y="-30%" width="160%" height="160%"><feGaussianBlur stdDeviation="1.500"/></filter></defs><rect x="1.500" y="8" width="50" height="48" rx="4" fill="#000" opacity=".28" filter="url(#wsh)"/><rect x="1" y="6" width="50" height="48.500" rx="4" fill="url(#wg)"/><path d="M20.500 14H36.500L29.500 22.800H7.700Z" fill="#a6d67c"/><path d="M7.700 22.800H29.500L36 30.500H19.500Z" fill="#bde693"/><path d="M16 30.500H42V38H24.500Z" fill="#7fd6fb"/><path d="M24.500 38H42L33 46.500H13Z" fill="#00b4fb"/></svg>
<svg class="abs" style="left:1513px;top:445px" width="80" height="80" viewBox="0 0 80 80"><defs><radialGradient id="gc"><stop offset="0" stop-color="#ffffff"/><stop offset=".55" stop-color="#fbfffa"/><stop offset=".85" stop-color="#e2f7df"/><stop offset="1" stop-color="#c4efc4"/></radialGradient><filter id="gsh" x="-30%" y="-30%" width="160%" height="160%"><feGaussianBlur stdDeviation="2.500"/></filter></defs><circle cx="40" cy="41" r="35" fill="#000" opacity=".07" filter="url(#gsh)"/><circle cx="40" cy="40" r="32.600" fill="#fafafa"/><circle cx="40" cy="40" r="28.500" fill="url(#gc)"/><path d="M40 9.5A30.5 30.5 0 1 1 9.74 36.18" fill="none" stroke="#3fd467" stroke-width="4.300"/><circle cx="40" cy="40" r="28.300" fill="none" stroke="#35c75c" stroke-width="1"/></svg>
<div class="t" style="left:1533px;top:466px;font-size:24.500px;color:#3e3e3e;letter-spacing:-.8px;font-weight:400">77</div>
<div class="t" style="left:1560px;top:476px;font-size:11.500px;color:#3e3e3e">%</div>
<svg class="abs" style="left:1534px;top:494px" width="6" height="9" viewBox="0 0 6 9"><path d="M3 8.500V1.500M0.500 4L3 1L5.500 4" fill="none" stroke="#2a84f0" stroke-width="1.300"/></svg>
<div class="t" style="left:1543px;top:494px;font-size:9.500px;color:#3a3a3a">1.7K/s</div>
<div class="abs" style="left:1459px;top:740px;width:141px;height:26px;background:#fff;border:1px solid #b3cbe8;border-radius:3px"></div>
<svg class="abs" style="left:1444px;top:733px" width="36" height="36" viewBox="0 0 36 36"><defs><linearGradient id="sg" x1="0" y1="0" x2="0" y2="1"><stop offset="0" stop-color="#f6772f"/><stop offset="1" stop-color="#ef4d1b"/></linearGradient></defs><g transform="rotate(-15 18 18)"><rect x="5" y="5" width="26" height="26" rx="4" fill="url(#sg)"/><path d="M25.500 12.500C22 10 14.500 9.500 11 12C7.500 14.800 10.500 17.600 17.500 18.300C22.500 18.800 24.500 20 22.500 21.800C20 23.800 14 23.800 10 22" fill="none" stroke="#fff" stroke-width="3.200" stroke-linecap="round"/></g></svg>
<div class="t" style="left:1484px;top:746px;font-size:14.500px;font-weight:700;color:#176ed8">中</div>
<svg class="abs" style="left:1509px;top:746px" width="14" height="16" viewBox="0 0 14 16"><circle cx="3" cy="3.500" r="1.700" fill="none" stroke="#176ed8" stroke-width="1.400"/><path d="M9 7.200A1.700 1.700 0 1 1 11.800 8.500C11.800 10.500 10.500 12 8.500 12.500C9.800 11.500 10.200 10.500 10 9.800A1.700 1.700 0 0 1 9 7.200Z" fill="#176ed8"/></svg>
<svg class="abs" style="left:1532px;top:744px" width="14" height="18" viewBox="0 0 14 18"><rect x="4.200" y="0.800" width="5.600" height="10" rx="2.800" fill="#176ed8"/><path d="M1.300 8C1.300 15.300 12.700 15.300 12.700 8" fill="none" stroke="#176ed8" stroke-width="1.400"/><path d="M7 13.500V16.500M4.500 16.500H9.500" stroke="#176ed8" stroke-width="1.400"/></svg>
<svg class="abs" style="left:1555px;top:746px" width="17" height="14" viewBox="0 0 17 14"><rect x="0.500" y="0.500" width="16" height="13" rx="2" fill="#176ed8"/><path d="M2.500 3h2v2h-2zM5.700 3h2v2h-2zM8.900 3h2v2h-2zM12.100 3h2v2h-2zM2.500 6.200h2v2h-2zM5.700 6.200h2v2h-2zM8.900 6.200h2v2h-2zM12.100 6.200h2v2h-2zM4 9.500h9v1.800H4z" fill="#fff"/></svg>
<svg class="abs" style="left:1581px;top:746px" width="14" height="14" viewBox="0 0 14 14"><rect x="0" y="0" width="6.300" height="6.300" rx="1.600" fill="#176ed8"/><rect x="7.500" y="0" width="6.300" height="6.300" rx="1.600" fill="#176ed8"/><rect x="9.300" y="1.800" width="2.700" height="2.700" fill="#fff"/><rect x="0" y="7.500" width="6.300" height="6.300" rx="1.600" fill="#176ed8"/><rect x="7.500" y="7.500" width="6.300" height="6.300" rx="1.600" fill="#176ed8"/></svg>
<div class="t" id="wm" style="left:1280px;top:801px;font-size:40px;color:#fff;text-shadow:1px 1px 0 #000,2px 2px .8px #000,2.500px 2.500px 1.500px rgba(0,0,0,.5);transform:skewX(-6deg);transform-origin:left bottom;letter-spacing:0;font-weight:400">头条 @极速手助</div>
<!--OV_END-->
<!--OVERLAYS-->
</body>
</html>
